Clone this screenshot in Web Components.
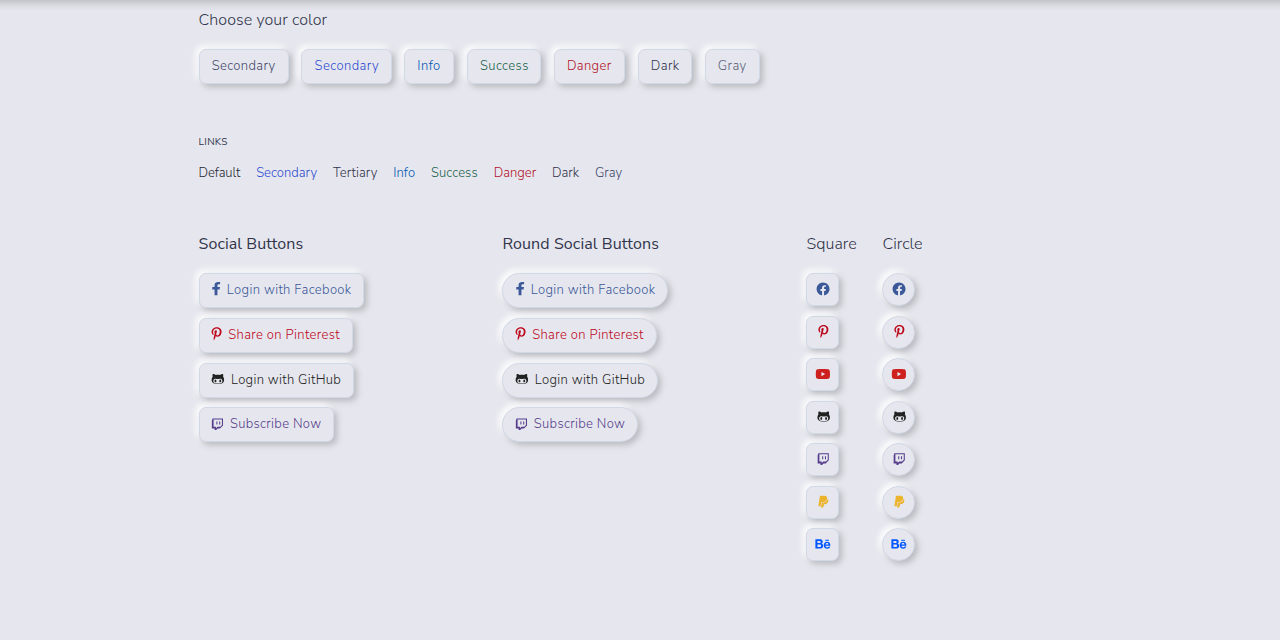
<!DOCTYPE html>
<html lang="en">
<head>
<meta charset="utf-8">
<title>Buttons</title>
<style>
html,body{margin:0;height:100%;overflow:hidden;background:#e6e7ee}
body{font-family:"Nunito Sans",Lato,sans-serif;font-weight:300;color:#31344b}
</style>
</head>
<body>
<buttons-page></buttons-page>
<script>
const ICONS={
f:[320,'M279.14 288l14.22-92.66h-88.91v-60.13c0-25.35 12.42-50.06 52.24-50.06h40.42V6.26S260.43 0 225.36 0c-73.22 0-121.08 44.38-121.08 124.72v70.62H22.89V288h81.39v224h100.17V288z'],
pinterest:[384,'M204 6.5C101.4 6.5 0 74.9 0 185.6 0 256 39.6 296 63.6 296c9.9 0 15.6-27.6 15.6-35.4 0-9.3-23.7-29.1-23.7-67.8 0-80.4 61.2-137.4 140.4-137.4 68.1 0 118.5 38.7 118.5 109.8 0 53.1-21.3 152.7-90.3 152.7-24.9 0-46.2-18-46.2-43.8 0-37.8 26.4-74.4 26.4-113.4 0-66.2-93.9-54.2-93.9 25.8 0 16.8 2.1 35.4 9.6 50.7-13.8 59.4-42 147.9-42 209.1 0 18.9 2.7 37.5 4.5 56.4 3.4 3.8 1.7 3.4 6.9 1.5 50.4-69 48.6-82.5 71.4-172.8 12.3 23.4 44.1 36 69.3 36 106.2 0 153.9-103.5 153.9-196.8C384 71.3 298.2 6.5 204 6.5z'],
facebook:[512,'M504 256C504 119 393 8 256 8S8 119 8 256c0 123.78 90.69 226.38 209.25 245V327.69h-63V256h63v-54.64c0-62.15 37-96.48 93.67-96.48 27.14 0 55.52 4.84 55.52 4.84v61h-31.28c-30.8 0-40.41 19.12-40.41 38.73V256h68.78l-11 71.69h-57.78V501C413.31 482.38 504 379.78 504 256z'],
youtube:[576,'M549.655 124.083c-6.281-23.65-24.787-42.276-48.284-48.597C458.781 64 288 64 288 64S117.22 64 74.629 75.486c-23.497 6.322-42.003 24.947-48.284 48.597-11.412 42.867-11.412 132.305-11.412 132.305s0 89.438 11.412 132.305c6.281 23.65 24.787 41.5 48.284 47.821C117.22 448 288 448 288 448s170.78 0 213.371-11.486c23.497-6.321 42.003-24.171 48.284-47.821 11.412-42.867 11.412-132.305 11.412-132.305s0-89.438-11.412-132.305zm-317.51 213.508V175.185l142.739 81.205-142.739 81.201z'],
github:[480,'M186.1 328.7c0 20.9-10.9 55.1-36.7 55.1s-36.7-34.2-36.7-55.1 10.9-55.1 36.7-55.1 36.7 34.2 36.7 55.1zM480 278.2c0 31.9-3.2 65.7-17.5 95-37.9 76.6-142.1 74.8-216.7 74.8-75.8 0-186.2 2.7-225.6-74.8-14.6-29-20.2-63.1-20.2-95 0-41.9 13.9-81.5 41.5-113.6-5.2-15.8-7.7-32.4-7.7-48.8 0-21.5 4.9-32.3 14.6-51.8 45.3 0 74.3 9 108.8 36 29-6.9 58.8-10 88.7-10 27 0 54.2 2.9 80.4 9.2 34-26.7 63-35.2 107.8-35.2 9.8 19.5 14.6 30.3 14.6 51.8 0 16.4-2.6 32.7-7.7 48.2 27.5 32.4 39 72.3 39 114.2zm-64.3 50.5c0-43.9-26.7-82.6-73.5-82.6-18.9 0-37 3.4-56 6-14.9 2.3-29.8 3.2-45.1 3.2-15.2 0-30.1-.9-45.1-3.2-18.7-2.6-37-6-56-6-46.8 0-73.5 38.7-73.5 82.6 0 87.8 80.4 101.3 150.4 101.3h48.2c70.3 0 150.6-13.4 150.6-101.3zm-82.6-55.1c-25.8 0-36.7 34.2-36.7 55.1s10.9 55.1 36.7 55.1 36.7-34.2 36.7-55.1-10.9-55.1-36.7-55.1z'],
twitch:[448,'M40.1 32L10 108.9v314.3h107V480h60.2l56.8-56.8h87l117-117V32H40.1zm357.8 254.1L331 353H224l-56.8 56.8V353H76.9V72.1h321v214zM331 149v116.9h-40.1V149H331zm-107 0v116.9h-40.1V149H224z'],
paypal:[384,'M111.4 295.9c-3.5 19.2-17.4 108.7-21.5 134-.3 1.8-1 2.5-3 2.5H12.3c-7.6 0-13.1-6.6-12.1-13.9L58.8 46.6c1.5-9.6 10.1-16.9 20-16.9 152.3 0 165.1-3.7 204 11.4 60.1 23.3 65.6 79.5 44 140.3-21.5 62.6-72.5 89.5-140.1 90.3-43.4.7-69.5-7-75.3 24.2zM357.1 152c-1.8-1.3-2.5-1.8-3 1.3-2 11.4-5.1 22.5-8.8 33.6-39.9 113.8-150.5 103.9-204.5 103.9-6.1 0-10.1 3.3-10.9 9.4-22.6 140.4-27.1 169.7-27.1 169.7-1 7.1 3.5 12.9 10.6 12.9h63.5c8.6 0 15.7-6.3 17.4-14.9.7-5.4-1.1 6.1 14.4-91.3 4.6-22 14.3-19.7 29.3-19.7 71 0 126.4-28.8 142.9-112.3 6.5-34.8 4.6-71.4-23.8-92.6z'],
behance:[576,'M232 237.2c31.8-15.2 48.4-38.2 48.4-74 0-70.6-52.6-87.8-113.3-87.8H0v354.4h171.8c64.4 0 124.9-30.9 124.9-102.9 0-44.5-21.1-77.4-64.7-89.7zM77.9 135.9H151c28.1 0 53.4 7.9 53.4 40.5 0 30.1-19.7 42.2-47.5 42.2h-79v-82.7zm83.3 233.7H77.9V272h84.9c34.3 0 56 14.3 56 50.6 0 35.8-25.9 47-57.6 47zm358.5-240.7H376V94h143.7v34.9zM576 305.2c0-75.9-44.4-139.2-124.9-139.2-78.2 0-131.3 58.8-131.3 135.8 0 79.9 50.3 134.7 131.3 134.7 61.3 0 101-27.6 120.1-86.3H509c-6.7 21.9-34.3 33.5-55.7 33.5-41.3 0-63-24.2-63-65.3h185.1c.3-4.2.6-8.7.6-13.2zM390.4 274c2.3-33.7 24.7-54.8 58.5-54.8 35.4 0 53.2 20.8 56.2 54.8H390.4z']
};

/* Single line of text, tracked so that it fills the width given in pixels. */
class FitText extends HTMLElement{
  connectedCallback(){
    const w=+this.getAttribute('w');
    this.attachShadow({mode:'open'}).innerHTML=`<style>:host{display:block;width:${w}px;white-space:nowrap;flex:none}span{display:inline-block}</style><span><slot></slot></span>`;
    const s=this.shadowRoot.querySelector('span'),n=this.textContent.length;
    s.style.letterSpacing=((w-s.getBoundingClientRect().width)/(n-.5)).toFixed(3)+'px';
  }
}

class BrandIcon extends HTMLElement{
  connectedCallback(){
    const name=this.getAttribute('name'),[w,d]=ICONS[name];
    const pw=w/512*13.33+(name==='f'?.8:0);
    this.attachShadow({mode:'open'}).innerHTML=`<style>:host{display:block;flex:none;height:13px;width:${pw}px}svg{display:block;height:13.33px;width:${pw}px;fill:currentColor;overflow:visible}</style><svg viewBox="0 0 ${w} 512" preserveAspectRatio="none"><path d="${d}"/></svg>`;
  }
  /* Keeps the glyph at the same sub-pixel height in every row. */
  snap(){
    const t=this.getBoundingClientRect().top,small=this.parentNode.hasAttribute('icon-only');
    this.shadowRoot.querySelector('svg').style.transform=`translate(${small?.4:-.4}px,${(Math.round(t-.1)-t-.6).toFixed(2)}px)`;
  }
}

/* Raised button: a label, an icon, or both. */
class SoftButton extends HTMLElement{
  connectedCallback(){
    this.attachShadow({mode:'open'}).innerHTML=`<style>
:host{display:block;flex:none}
button{all:unset;box-sizing:border-box;display:flex;align-items:center;width:100%;height:100%;padding:0 0 1.1px 12.2px;border:1px solid #d1d9e6;border-radius:var(--radius,7px);background:#e6e7ee;box-shadow:3px 3px 6px #b8b9be,-3px -3px 6px #fff;font-size:13px;line-height:18px}
:host([icon-only]) button{justify-content:center;padding:0}
::slotted(brand-icon){margin-right:var(--gap,0)}
</style><button><slot></slot></button>`;
  }
}

const COLORS=[['Secondary',90.5,63.7,'#44476a'],['Secondary',90.3,64.3,'#2f4bd0'],['Info',50.4,23.2,'#0056b3'],['Success',74.5,48.5,'#18634b'],['Danger',71.5,44.4,'#b3122b'],['Dark',54.6,28.4,'#31344b'],['Gray',55.3,28.6,'#5b5f78']];
const LINKS=[['Default',41.8,'#262833'],['Secondary',60.9,'#2f4bd0'],['Tertiary',44.4,'#31344b'],['Info',21.8,'#0056b3'],['Success',46.8,'#18634b'],['Danger',42.6,'#b3122b'],['Dark',26.9,'#31344b'],['Gray',27.2,'#44476a']];
const SOCIAL=[['f','Login with Facebook',165.3,124.5,'#3b5999',6],['pinterest','Share on Pinterest',154.3,111.5,'#bd081c',6.6],['github','Login with GitHub',155.3,110,'#222222',6.8],['twitch','Subscribe Now',135.3,91.3,'#563d8c',6.6]];
const SMALL=[['facebook','#3b5999'],['pinterest','#bd081c'],['youtube','#cd201f'],['github','#222222'],['twitch','#563d8c'],['paypal','#ecb32c'],['behance','#0057ff']];

const social=()=>SOCIAL.map(([i,t,w,tw,c,g])=>`<soft-button style="width:${w}px;height:35px;color:${c};--gap:${g}px"><brand-icon name="${i}"></brand-icon><fit-text w="${tw}">${t}</fit-text></soft-button>`).join('');
const small=()=>SMALL.map(([i,c])=>`<soft-button icon-only style="width:33px;height:33px;color:${c}"><brand-icon name="${i}"></brand-icon></soft-button>`).join('');

class ButtonsPage extends HTMLElement{
  connectedCallback(){
    this.attachShadow({mode:'open'}).innerHTML=`<style>
:host{display:block;box-sizing:border-box;height:640px;padding:10px 0 0 198.5px;background:#e6e7ee;overflow:hidden;position:relative}
.edge{position:absolute;left:-20px;right:-20px;top:-10px;height:10px;box-shadow:0 2px 10px rgba(0,0,0,.24)}
h3{margin:0;font-size:16px;line-height:20px;font-weight:400;height:20px}
h3.lt{font-weight:300}
.colors{display:flex;gap:12.4px;margin-top:19px;height:35px}
h6{margin:51px 0 0;font-size:10px;line-height:14px;font-weight:400;color:#31344b}
.links{display:flex;gap:15.9px;margin-top:15px;font-size:13px;line-height:18px}
.cols{display:grid;grid-template-columns:303.9px 304px 76px 76px;margin-top:52px}
.stack{display:flex;flex-direction:column;gap:9.8px;margin-top:19px}
.stack.s{gap:9.5px}
.round{--radius:18px}
</style>
<div class="edge"></div>
<h3 class="lt"><fit-text w="128.5">Choose your color</fit-text></h3>
<div class="colors">${COLORS.map(([t,w,tw,c])=>`<soft-button style="width:${w}px;color:${c}"><fit-text w="${tw}">${t}</fit-text></soft-button>`).join('')}</div>
<h6><fit-text w="29">LINKS</fit-text></h6>
<div class="links">${LINKS.map(([t,w,c])=>`<fit-text w="${w}" style="color:${c}">${t}</fit-text>`).join('')}</div>
<div class="cols">
<section><h3><fit-text w="104.7">Social Buttons</fit-text></h3><div class="stack">${social()}</div></section>
<section><h3><fit-text w="156.5">Round Social Buttons</fit-text></h3><div class="stack round">${social()}</div></section>
<section><h3 class="lt"><fit-text w="50.4">Square</fit-text></h3><div class="stack s">${small()}</div></section>
<section><h3 class="lt"><fit-text w="40.2">Circle</fit-text></h3><div class="stack s round">${small()}</div></section>
</div>`;
    this.shadowRoot.querySelectorAll('brand-icon').forEach(i=>i.snap());
  }
}
customElements.define('fit-text',FitText);
customElements.define('brand-icon',BrandIcon);
customElements.define('soft-button',SoftButton);
customElements.define('buttons-page',ButtonsPage);
</script>
</body>
</html>
